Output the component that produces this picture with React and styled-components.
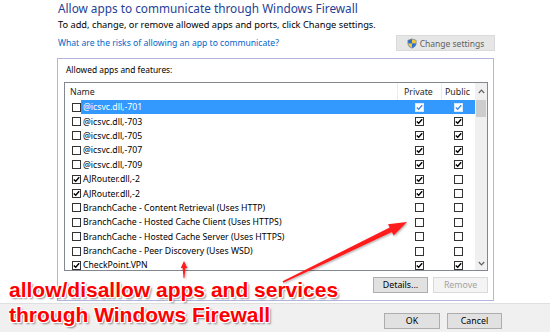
import React from 'react';
import styled, { createGlobalStyle } from 'styled-components';

const Global = createGlobalStyle`
  html, body { margin: 0; padding: 0; background: #fff; }
  body {
    width: 550px; height: 332px; overflow: hidden;
    font-family: "Noto Sans", "Open Sans", sans-serif;
  }
`;

const Page = styled.div`
  position: relative;
  width: 550px;
  height: 332px;
  display: flex;
  flex-direction: column;
  overflow: hidden;
`;

const Main = styled.div`
  height: 303px;
  box-sizing: border-box;
  padding-left: 57px;
  display: flex;
  flex-direction: column;
  background: #fff;
`;

const Title = styled.h1`
  margin: 0 0 0 1px;
  font-weight: 400;
  font-size: 11.8px;
  line-height: 16px;
  color: #1f3f96;
`;

const Subtitle = styled.p`
  margin: 3px 0 0 1px;
  font-size: 9.25px;
  line-height: 12px;
  color: #000;
`;

const LinkRow = styled.div`
  margin-top: 4px;
  width: 438px;
  height: 16px;
  display: flex;
  align-items: center;
  justify-content: space-between;
`;

const Link = styled.a`
  margin-left: 1px;
  font-size: 8.6px;
  color: #0066cc;
  text-decoration: none;
`;

const Button = styled.button`
  box-sizing: border-box;
  width: ${p => p.$w || 55}px;
  height: 16px;
  padding: 0;
  display: flex;
  align-items: center;
  justify-content: center;
  gap: 3px;
  font-family: inherit;
  font-size: 8.8px;
  color: ${p => (p.$disabled ? '#a3a3a3' : '#000')};
  background: ${p => (p.$disabled ? '#f4f4f4' : '#e1e1e1')};
  border: 1px solid ${p => (p.$disabled ? '#d9d9d9' : '#adadad')};
`;

const SettingsButton = styled(Button)`
  font-size: 8.5px;
  color: #5f5f5f;
  background: #e6e6e6;
  border-color: #dadada;
`;

const GroupBox = styled.fieldset`
  margin: 7px 0 0 0;
  padding: 5px 5px 0 6px;
  width: 437px;
  height: 243px;
  box-sizing: border-box;
  border: 1px solid #b4b4dc;
  display: flex;
  flex-direction: column;
  min-width: 0;
`;

const GroupLabel = styled.div`
  padding-left: 2px;
  font-size: 8.4px;
  line-height: 12px;
  color: #000;
`;

const ListBox = styled.div`
  margin-top: 6px;
  width: 424px;
  height: 189px;
  box-sizing: border-box;
  border: 1px solid #828790;
  display: flex;
  overflow: hidden;
  background: #fff;
`;

const Table = styled.div`
  flex: 1;
  display: flex;
  flex-direction: column;
  overflow: hidden;
`;

const HeaderRow = styled.div`
  height: 17px;
  flex: none;
  display: flex;
  align-items: center;
  font-size: 8.8px;
  color: #1e1e1e;
`;

const HeaderCell = styled.div`
  box-sizing: border-box;
  height: 100%;
  display: flex;
  align-items: center;
  width: ${p => (p.$w ? `${p.$w}px` : 'auto')};
  flex: ${p => (p.$w ? 'none' : '1')};
  padding-left: ${p => p.$pl}px;
  border-left: ${p => (p.$sep ? '1px solid #ececec' : 'none')};
`;

const Row = styled.div`
  height: 14.4px;
  flex: none;
  display: flex;
  align-items: center;
  padding-left: 7px;
`;

const RowBody = styled.div`
  flex: 1;
  height: 100%;
  display: flex;
  align-items: center;
  background: ${p => (p.$selected ? '#3399ff' : 'transparent')};
  color: ${p => (p.$selected ? '#fff' : '#000')};
  font-size: 8.7px;
`;

const NameText = styled.span`
  flex: 1;
  padding-left: 2px;
  line-height: 8px;
  white-space: nowrap;
`;

const CheckCell = styled.div`
  width: ${p => p.$w}px;
  flex: none;
  display: flex;
  justify-content: center;
  align-items: center;
`;

const Box = styled.span`
  display: inline-flex;
  width: 9px;
  height: 9px;
  box-sizing: border-box;
  flex: none;
  border: 1px solid ${p => (p.$light ? '#d6e8fb' : '#333')};
  background: #fff;
  align-items: center;
  justify-content: center;
`;

const Scrollbar = styled.div`
  width: 12px;
  flex: none;
  background: #f0f0f0;
  display: flex;
  flex-direction: column;
`;

const ScrollArrow = styled.div`
  height: ${p => p.$h}px;
  display: flex;
  align-items: center;
  justify-content: center;
`;

const Thumb = styled.div`
  height: 17px;
  margin: 0 1px;
  background: #cdcdcd;
`;

const ScrollTrack = styled.div`
  flex: 1;
`;

const GroupButtons = styled.div`
  margin-top: 6px;
  display: flex;
  justify-content: flex-end;
  gap: 5px;
`;

const BottomBar = styled.div`
  flex: 1;
  border-top: 1px solid #dfdfdf;
  background: #f0f0f0;
  display: flex;
  justify-content: flex-end;
  align-items: flex-start;
  padding: 9px 48px 0 0;
  gap: 7px;
`;

const Annotation = styled.div`
  position: absolute;
  left: 9px;
  top: 277px;
  font-family: "Liberation Sans", Arial, sans-serif;
  font-weight: 700;
  font-size: 21px;
  line-height: 25px;
  color: #ff0000;
  white-space: nowrap;
  text-shadow:
    1px 0 0 #fff, -1px 0 0 #fff, 0 1px 0 #fff, 0 -1px 0 #fff,
    1px 1px 0 #fff, -1px -1px 0 #fff, 1px -1px 0 #fff, -1px 1px 0 #fff,
    2px 2px 2px rgba(0, 0, 0, 0.45);
  pointer-events: none;
`;

const ArrowLayer = styled.svg`
  position: absolute;
  left: 0;
  top: 0;
  pointer-events: none;
`;

function CheckBox({ checked, light }) {
  return (
    <Box $light={light}>
      {checked && (
        <svg width="7" height="7" viewBox="0 0 7 7">
          <path
            d="M0.8 3.4 L2.7 5.3 L6.2 1.2"
            fill="none"
            stroke={light ? '#3d8ae0' : '#000'}
            strokeWidth="1.4"
          />
        </svg>
      )}
    </Box>
  );
}

function Shield() {
  return (
    <svg width="10" height="11" viewBox="0 0 10 11">
      <path d="M5 0.5 L9.5 2 V5.5 C9.5 8 7.5 9.6 5 10.5 C2.5 9.6 0.5 8 0.5 5.5 V2 Z" fill="#7a8da8" />
      <path d="M5 1.2 V5.5 H1.2 V2.4 Z" fill="#2b6fd1" />
      <path d="M5 1.2 L8.8 2.4 V5.5 H5 Z" fill="#f0c93a" />
      <path d="M1.2 5.5 H5 V9.7 C2.9 8.9 1.3 7.6 1.2 5.5 Z" fill="#f0c93a" />
      <path d="M5 5.5 H8.8 C8.7 7.6 7.1 8.9 5 9.7 Z" fill="#2b6fd1" />
    </svg>
  );
}

const rows = [
  { name: '@icsvc.dll,-701', on: false, pr: true, pu: true, selected: true },
  { name: '@icsvc.dll,-703', on: false, pr: true, pu: true },
  { name: '@icsvc.dll,-705', on: false, pr: true, pu: true },
  { name: '@icsvc.dll,-707', on: false, pr: true, pu: true },
  { name: '@icsvc.dll,-709', on: false, pr: true, pu: true },
  { name: 'AJRouter.dll,-2', on: true, pr: true, pu: false },
  { name: 'AJRouter.dll,-2', on: true, pr: true, pu: false },
  { name: 'BranchCache - Content Retrieval (Uses HTTP)', on: false, pr: false, pu: false },
  { name: 'BranchCache - Hosted Cache Client (Uses HTTPS)', on: false, pr: false, pu: false },
  { name: 'BranchCache - Hosted Cache Server (Uses HTTPS)', on: false, pr: false, pu: false },
  { name: 'BranchCache - Peer Discovery (Uses WSD)', on: false, pr: false, pu: false },
  { name: 'CheckPoint.VPN', on: true, pr: true, pu: true },
];

export default function App() {
  return (
    <>
      <Global />
      <Page>
        <Main>
          <Title>Allow apps to communicate through Windows Firewall</Title>
          <Subtitle>To add, change, or remove allowed apps and ports, click Change settings.</Subtitle>
          <LinkRow>
            <Link href="#">What are the risks of allowing an app to communicate?</Link>
            <SettingsButton $w={99}>
              <Shield />
              Change settings
            </SettingsButton>
          </LinkRow>
          <GroupBox>
            <GroupLabel>Allowed apps and features:</GroupLabel>
            <ListBox>
              <Table>
                <HeaderRow>
                  <HeaderCell $pl={5}>Name</HeaderCell>
                  <HeaderCell $w={44} $pl={6} $sep>Private</HeaderCell>
                  <HeaderCell $w={34} $pl={3} $sep>Public</HeaderCell>
                </HeaderRow>
                {rows.map((r, i) => (
                  <Row key={i}>
                    <CheckBox checked={r.on} />
                    <RowBody $selected={r.selected}>
                      <NameText>{r.name}</NameText>
                      <CheckCell $w={44}>
                        <CheckBox checked={r.pr} light={r.selected} />
                      </CheckCell>
                      <CheckCell $w={34}>
                        <CheckBox checked={r.pu} light={r.selected} />
                      </CheckCell>
                    </RowBody>
                  </Row>
                ))}
              </Table>
              <Scrollbar>
                <ScrollArrow $h={17}>
                  <svg width="7" height="5" viewBox="0 0 7 5">
                    <path d="M0.8 4 L3.5 1.2 L6.2 4" fill="none" stroke="#606060" strokeWidth="1.2" />
                  </svg>
                </ScrollArrow>
                <Thumb />
                <ScrollTrack />
                <ScrollArrow $h={14}>
                  <svg width="7" height="5" viewBox="0 0 7 5">
                    <path d="M0.8 1 L3.5 3.8 L6.2 1" fill="none" stroke="#606060" strokeWidth="1.2" />
                  </svg>
                </ScrollArrow>
              </Scrollbar>
            </ListBox>
            <GroupButtons>
              <Button $w={55}>Details...</Button>
              <Button $w={55} $disabled>Remove</Button>
            </GroupButtons>
          </GroupBox>
        </Main>
        <BottomBar>
          <Button $w={56}>OK</Button>
          <Button $w={55}>Cancel</Button>
        </BottomBar>
        <Annotation>
          allow/disallow apps and services
          <br />
          through Windows Firewall
        </Annotation>
        <ArrowLayer width="550" height="332" viewBox="0 0 550 332">
          <defs>
            <filter id="sh" x="-10%" y="-10%" width="130%" height="130%">
              <feDropShadow dx="1" dy="1" stdDeviation="0.8" floodColor="#000" floodOpacity="0.35" />
            </filter>
          </defs>
          <polygon
            filter="url(#sh)"
            fill="#ff1a1a"
            points="282.6,281.3 389.7,227.4 388.0,224.2 407,222 393.6,235.4 391.9,232.1 283.4,282.7"
          />
          <polygon
            filter="url(#sh)"
            fill="#ff1a1a"
            points="183.6,278 182.6,268 180.8,268 184,261 187.2,268 185.4,268 184.4,278"
          />
        </ArrowLayer>
      </Page>
    </>
  );
}
